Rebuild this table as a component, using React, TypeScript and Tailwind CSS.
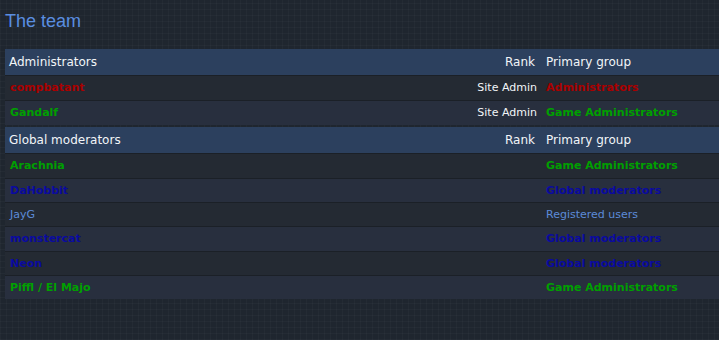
type Member = {
  name: string;
  rank?: string;
  group: string;
  color: string;
  bold?: boolean;
};

const admins: Member[] = [
  { name: 'compbatant', rank: 'Site Admin', group: 'Administrators', color: 'text-[#aa0000]', bold: true },
  { name: 'Gandalf', rank: 'Site Admin', group: 'Game Administrators', color: 'text-[#00a000]', bold: true },
];

const mods: Member[] = [
  { name: 'Arachnia', group: 'Game Administrators', color: 'text-[#00a000]', bold: true },
  { name: 'DaHobbit', group: 'Global moderators', color: 'text-[#0a0aa0]', bold: true },
  { name: 'JayG', group: 'Registered users', color: 'text-[#5c8ad8]' },
  { name: 'monstercat', group: 'Global moderators', color: 'text-[#0a0aa0]', bold: true },
  { name: 'Neon', group: 'Global moderators', color: 'text-[#0a0aa0]', bold: true },
  { name: 'Piffl / El Majo', group: 'Game Administrators', color: 'text-[#00a000]', bold: true },
];

const TeamTable = ({ title, rows, heights }: { title: string; rows: Member[]; heights: string[] }) => {
  return (
    <div className="w-[740px] mb-[2px]">
      <div className="flex h-[26px] items-center bg-[#2c405e] text-[12px] text-[#f2f5f8]">
        <div className="w-[440px] pl-[4px]">{title}</div>
        <div className="w-[90px] text-right">Rank</div>
        <div className="pl-[11px]">Primary group</div>
      </div>
      {rows.map((m, i) => (
        <div
          key={m.name}
          className={`flex ${heights[i]} items-center border-t border-[#1b2027] pt-[1px] text-[11px] ${
            i % 2 === 0 ? 'bg-[#242a33]' : 'bg-[#282f3e]'
          }`}
        >
          <div className={`w-[440px] pl-[5px] ${m.color} ${m.bold ? 'font-bold' : ''}`}>{m.name}</div>
          <div className="w-[92px] text-right text-[#f2f5f8]">{m.rank ?? ''}</div>
          <div className={`pl-[9px] ${m.color} ${m.bold ? 'font-bold' : ''}`}>{m.group}</div>
        </div>
      ))}
    </div>
  );
};

export default function App() {
  return (
    <div
      className="w-[719px] h-[340px] overflow-hidden bg-[#1f262f] bg-[image:repeating-linear-gradient(90deg,rgba(255,255,255,0.025)_0_1px,transparent_1px_6px),repeating-linear-gradient(0deg,rgba(255,255,255,0.025)_0_1px,transparent_1px_6px)] pl-[5px] pt-[10px]"
      style={{ fontFamily: '"DejaVu Sans", Verdana, sans-serif' }}
    >
      <h2 className="h-[22px] leading-[22px] text-[18px] text-[#5a8ee0] mb-[17px]" style={{ fontFamily: '"Liberation Sans", Arial, sans-serif' }}>
        The team
      </h2>
      <TeamTable title="Administrators" rows={admins} heights={['h-[25px]', 'h-[25px]']} />
      <TeamTable
        title="Global moderators"
        rows={mods}
        heights={['h-[25px]', 'h-[24px]', 'h-[24px]', 'h-[25px]', 'h-[24px]', 'h-[24px]']}
      />
    </div>
  );
}
